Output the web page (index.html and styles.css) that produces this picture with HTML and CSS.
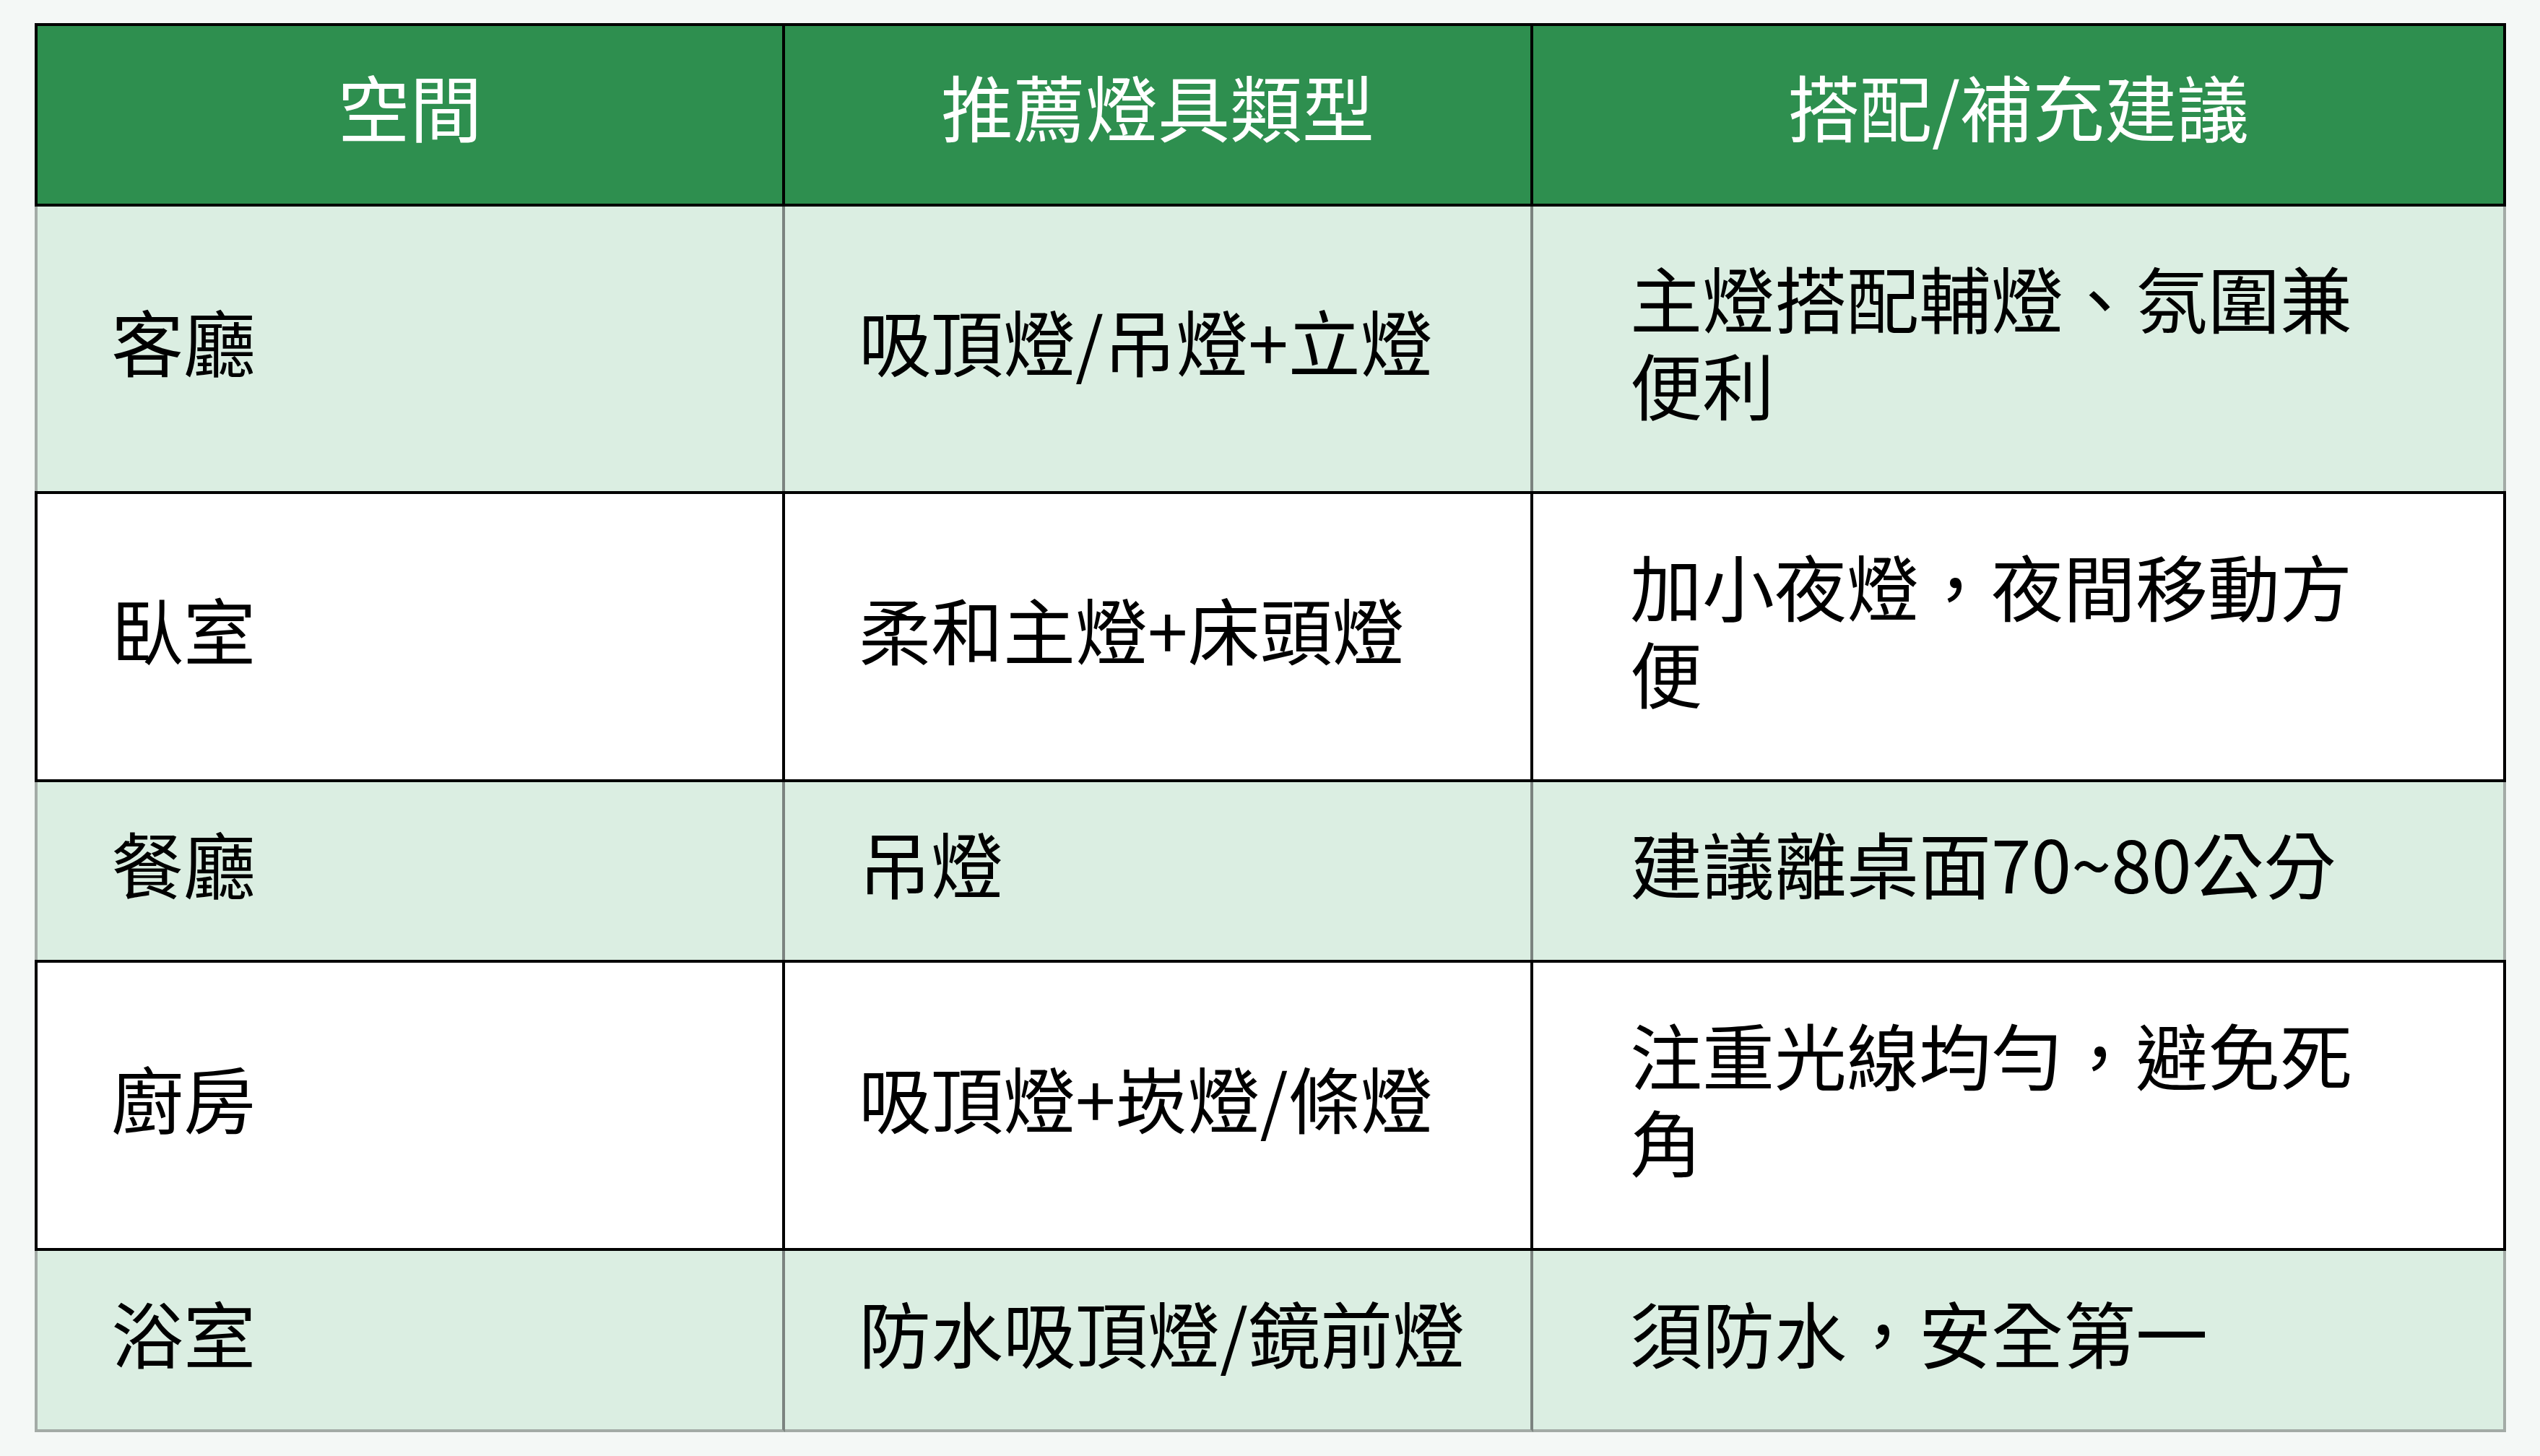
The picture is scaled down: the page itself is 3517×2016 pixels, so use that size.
FILE: index.html
```html
<!DOCTYPE html>
<html lang="zh-Hant">
<head>
<meta charset="utf-8">
<title>燈具建議</title>
<link rel="stylesheet" href="styles.css">
</head>
<body>
<table class="light-table">
  <colgroup>
    <col class="c1"><col class="c2"><col class="c3">
  </colgroup>
  <thead>
    <tr class="head-row">
      <th>空間</th>
      <th>推薦燈具類型</th>
      <th>搭配/補充建議</th>
    </tr>
  </thead>
  <tbody>
    <tr class="green tall">
      <td>客廳</td>
      <td>吸頂燈/吊燈+立燈</td>
      <td class="note">主燈搭配輔燈、氛圍兼便利</td>
    </tr>
    <tr class="white tall">
      <td>臥室</td>
      <td>柔和主燈+床頭燈</td>
      <td class="note">加小夜燈，夜間移動方便</td>
    </tr>
    <tr class="green short">
      <td>餐廳</td>
      <td>吊燈</td>
      <td class="note">建議離桌面70~80公分</td>
    </tr>
    <tr class="white tall">
      <td>廚房</td>
      <td>吸頂燈+崁燈/條燈</td>
      <td class="note">注重光線均勻，避免死角</td>
    </tr>
    <tr class="green short last">
      <td>浴室</td>
      <td>防水吸頂燈/鏡前燈</td>
      <td class="note">須防水，安全第一</td>
    </tr>
  </tbody>
</table>
</body>
</html>
```

FILE: styles.css
```css
html, body {
  margin: 0;
  padding: 0;
  background: #f4f8f6;
}

body {
  padding: 32px 0 0 48px;
  font-family: "Noto Sans CJK TC", "Noto Sans CJK SC", sans-serif;
  color: #000;
}

.light-table {
  border-collapse: separate;
  border-spacing: 0;
  table-layout: fixed;
  width: 3422px;
  font-size: 100px;
  line-height: 1.2;
}

.c1 { width: 1039px; }
.c2 { width: 1036px; }
.c3 { width: 1347px; }

th, td {
  padding: 0 0 0 102px;
  vertical-align: middle;
  text-align: left;
  font-weight: 400;
}

td.note {
  padding: 0 134px;
}

.head-row {
  height: 254px;
  background: #2e8f4f;
}

.head-row th {
  color: #fff;
  text-align: center;
  padding: 0 0 27px 0;
  border-top: 4px solid #000;
  border-bottom: 4px solid #000;
  border-right: 4px solid #000;
}

.head-row th:first-child {
  border-left: 4px solid #000;
}

tbody td,
tbody td.note {
  padding-bottom: 24px;
}

.green {
  background: #dbeee2;
}

.green td {
  border-right: 4px solid #7b837f;
}

.green td:first-child {
  border-left: 4px solid #a3aba6;
}

.green td:last-child {
  border-right-color: #a3aba6;
}

.white {
  background: #fff;
}

.white td {
  border-top: 4px solid #000;
  border-bottom: 4px solid #000;
  border-right: 4px solid #000;
}

.white td:first-child {
  border-left: 4px solid #000;
}

.green.tall { height: 394px; }
.white.tall { height: 403px; }
.green.short { height: 246px; }
.green.short.last { height: 251px; }

.last td {
  border-bottom: 4px solid #a3aba6;
}
```
